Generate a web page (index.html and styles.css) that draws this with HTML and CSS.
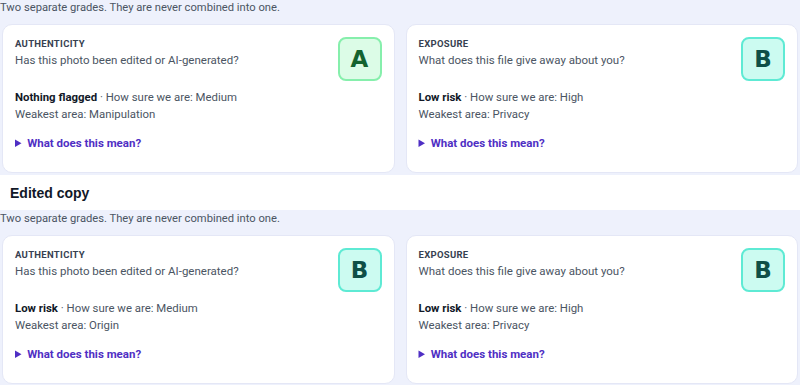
FILE: index.html
```html
<!DOCTYPE html>
<html lang="en">
<head>
    <meta charset="UTF-8">
    <meta name="viewport" content="width=device-width, initial-scale=1.0">
    <title>Grades</title>
    <link rel="stylesheet" href="styles.css">
</head>
<body>
    <section class="grades grades-top">
        <p class="note">Two separate grades. They are never combined into one.</p>
        <div class="cards">
            <div class="card">
                <div class="card-head">
                    <div>
                        <div class="label">Authenticity</div>
                        <div class="question">Has this photo been edited or AI-generated?</div>
                    </div>
                    <div class="badge badge-a">A</div>
                </div>
                <p class="line"><b>Nothing flagged</b> · How sure we are: Medium</p>
                <p class="line">Weakest area: Manipulation</p>
                <details>
                    <summary>What does this mean?</summary>
                </details>
            </div>
            <div class="card">
                <div class="card-head">
                    <div>
                        <div class="label">Exposure</div>
                        <div class="question">What does this file give away about you?</div>
                    </div>
                    <div class="badge badge-b">B</div>
                </div>
                <p class="line"><b>Low risk</b> · How sure we are: High</p>
                <p class="line">Weakest area: Privacy</p>
                <details>
                    <summary>What does this mean?</summary>
                </details>
            </div>
        </div>
    </section>

    <h3 class="copy-title">Edited copy</h3>

    <section class="grades">
        <p class="note">Two separate grades. They are never combined into one.</p>
        <div class="cards">
            <div class="card">
                <div class="card-head">
                    <div>
                        <div class="label">Authenticity</div>
                        <div class="question">Has this photo been edited or AI-generated?</div>
                    </div>
                    <div class="badge badge-b">B</div>
                </div>
                <p class="line"><b>Low risk</b> · How sure we are: Medium</p>
                <p class="line">Weakest area: Origin</p>
                <details>
                    <summary>What does this mean?</summary>
                </details>
            </div>
            <div class="card">
                <div class="card-head">
                    <div>
                        <div class="label">Exposure</div>
                        <div class="question">What does this file give away about you?</div>
                    </div>
                    <div class="badge badge-b">B</div>
                </div>
                <p class="line"><b>Low risk</b> · How sure we are: High</p>
                <p class="line">Weakest area: Privacy</p>
                <details>
                    <summary>What does this mean?</summary>
                </details>
            </div>
        </div>
    </section>
</body>
</html>
```

FILE: styles.css
```css
body {
    margin: 0;
    font-family: Roboto, Lato, sans-serif;
    background: #ffffff;
    color: #4b5563;
}

.grades {
    background: #eef1fc;
    padding: 1px 2px 2px 0;
}
.grades-top {
    padding-top: 0;
}

.note {
    margin: 0 0 8px 0;
    font-size: 11.2px;
    line-height: 16px;
    color: #4b5563;
}

.cards {
    display: grid;
    grid-template-columns: 1fr 1fr;
    gap: 11px;
    padding-left: 2px;
}

.card {
    background: #ffffff;
    border: 1px solid #e4e7f6;
    border-radius: 10px;
    padding: 12px 12px 20px 12px;
}

.card-head {
    display: flex;
    justify-content: space-between;
    align-items: flex-start;
}

.label {
    font-size: 9.5px;
    line-height: 14px;
    font-weight: 700;
    text-transform: uppercase;
    letter-spacing: 0.3px;
    color: #374151;
}
.question {
    font-size: 11.5px;
    line-height: 18px;
    color: #4b5563;
}

.badge {
    width: 40px;
    height: 40px;
    border: 2px solid;
    border-radius: 8px;
    display: flex;
    align-items: center;
    justify-content: center;
    font-family: "DejaVu Sans", sans-serif;
    font-weight: 700;
    font-size: 23px;
}
.badge-a {
    background: #dcfce7;
    border-color: #86efac;
    color: #14632f;
}
.badge-b {
    background: #ccfbf1;
    border-color: #5eead4;
    color: #0f4f47;
}

.line {
    margin: 0;
    font-size: 11.4px;
    line-height: 17px;
    color: #4b5563;
}
.card-head + .line {
    margin-top: 8px;
}
.line b {
    color: #111827;
    font-weight: 700;
}

details {
    margin-top: 11px;
}
summary {
    font-size: 11.5px;
    line-height: 18px;
    font-weight: 700;
    color: #4f2fc4;
    cursor: pointer;
}

.copy-title {
    margin: 0;
    padding: 2px 10px 0;
    font-family: "Liberation Sans", Arial, sans-serif;
    font-size: 14px;
    line-height: 33px;
    color: #111827;
}
```
